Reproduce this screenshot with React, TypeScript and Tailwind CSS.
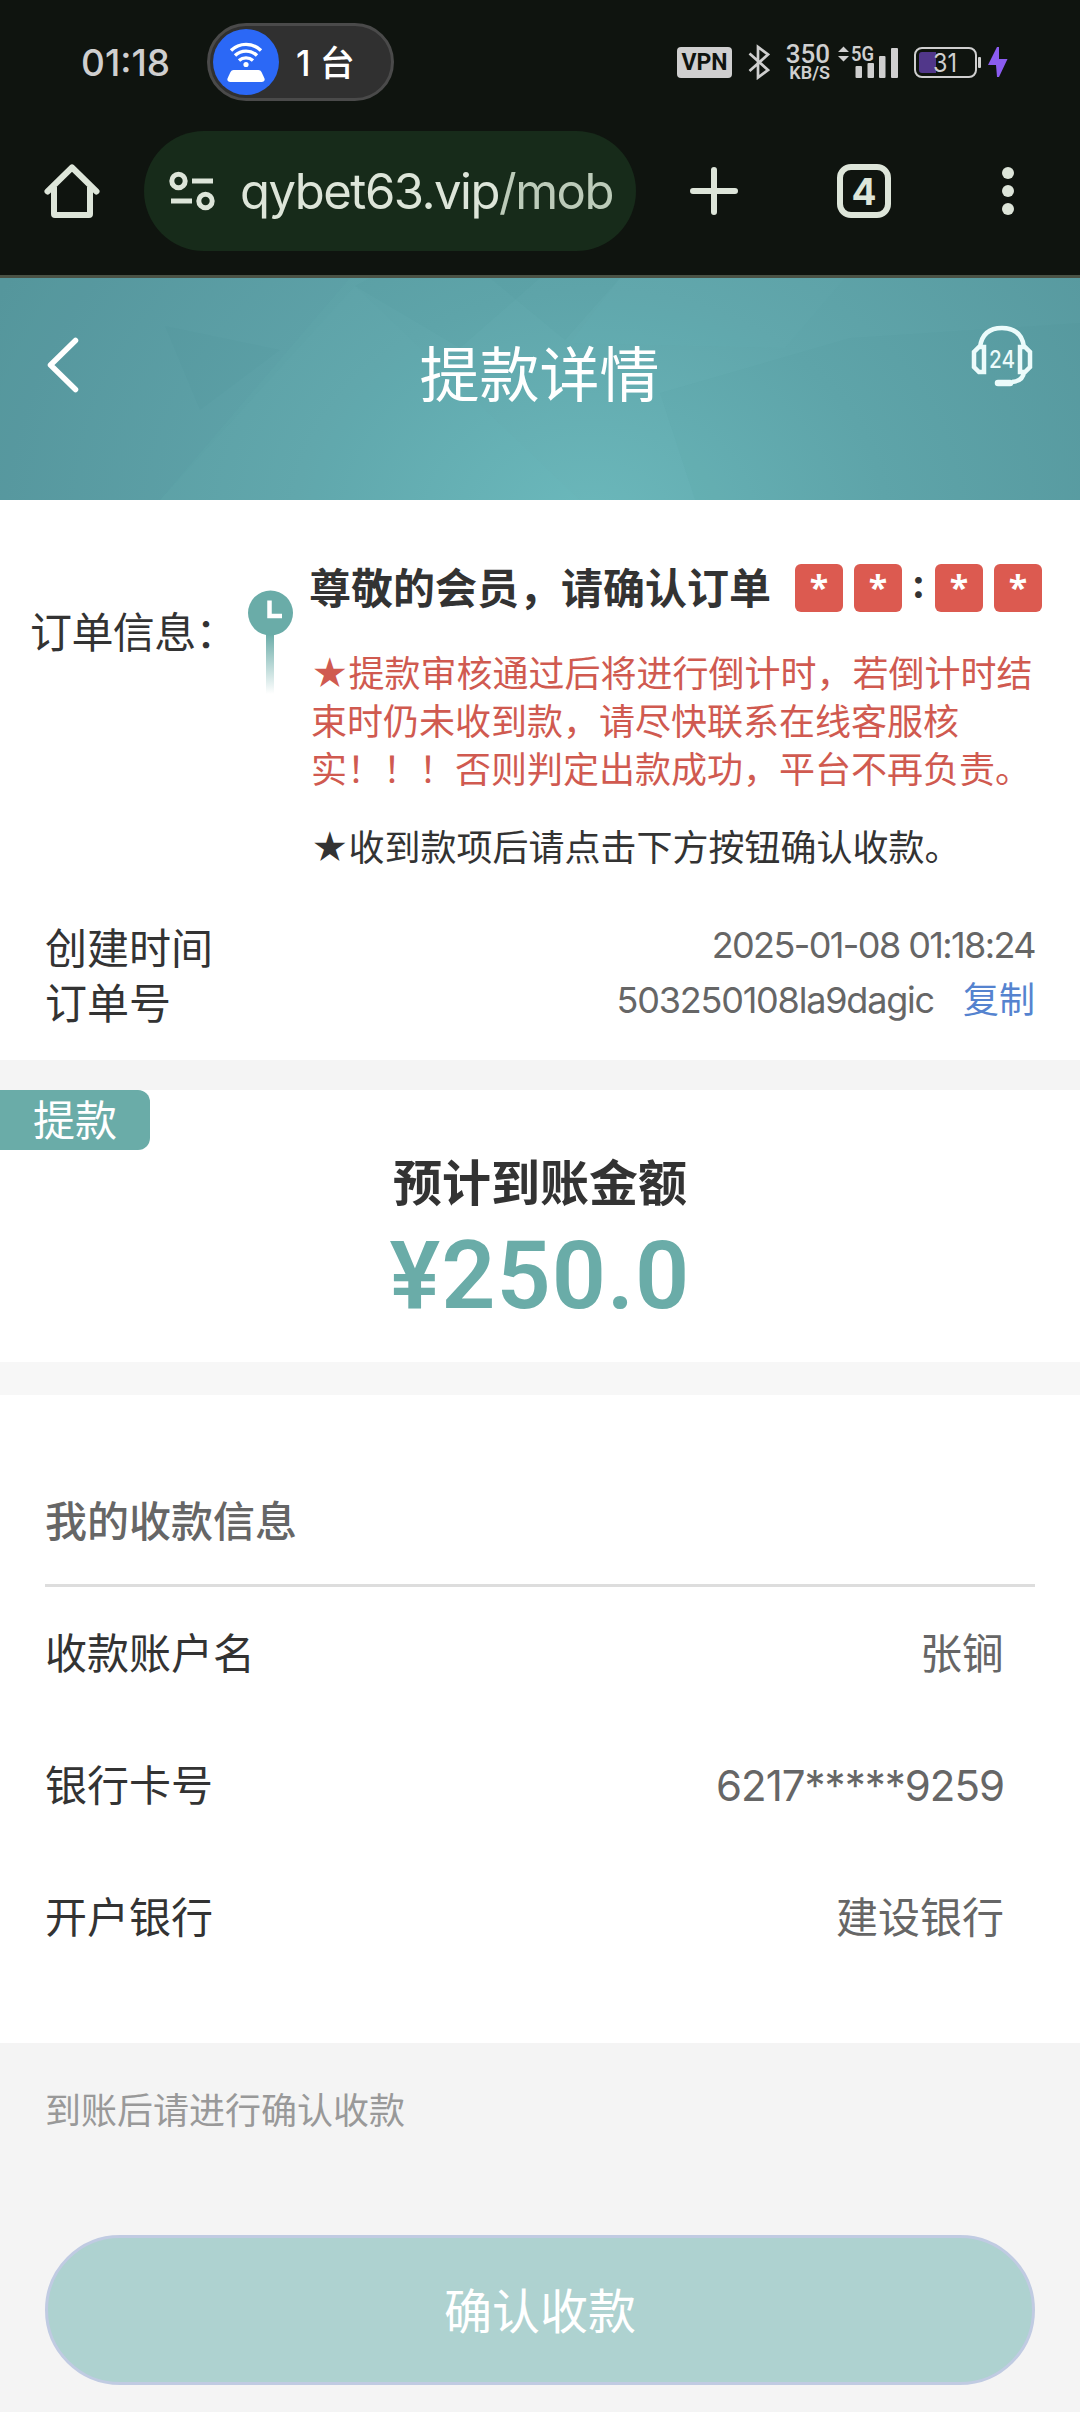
import type { ReactNode } from 'react'

const payeeRows = [
    { label: '收款账户名', value: '张锏' },
    { label: '银行卡号', value: '6217*****9259', numeric: true },
    { label: '开户银行', value: '建设银行' },
]

function StatusBar() {
    return (
        <div className="flex h-[124px] items-center pl-[81px] pr-[71px] text-[#cfcfcf]">
            <div className="w-[126px] text-[37px] font-medium leading-none">01:18</div>
            <div className="flex h-[78px] w-[187px] items-center rounded-full border-[3px] border-[#4a4a4a] bg-[#303030] pl-[3px]">
                <svg width="66" height="66" viewBox="0 0 66 66" fill="none">
                    <circle cx="33" cy="33" r="33" fill="#2b68f6" />
                    <g stroke="#fff" strokeWidth="3.4">
                        <path d="M18 21.500a21.500 21.500 0 0 1 30 0" />
                        <path d="M22 26.500a16 16 0 0 1 22 0" />
                        <path d="M26 31.500a10.500 10.500 0 0 1 14 0" />
                    </g>
                    <circle cx="33" cy="35.500" r="2.600" fill="#fff" />
                    <path d="M20.500 41h25q2 0 3 2l3 6.500q.8 3.500-3 3.500h-31q-3.800 0-3-3.500l3-6.500q1-2 3-2z" fill="#fff" />
                </svg>
                <span className="ml-[17px] pt-[2px] text-[35px] font-medium leading-none text-white">1 台</span>
            </div>
            <div className="ml-auto flex items-center">
                <div className="flex h-[31px] w-[55px] items-center justify-center rounded-[4px] bg-[#cfcfcf] font-[Roboto] text-[23px] font-bold leading-none text-[#0f140f]">
                    VPN
                </div>
                <svg className="ml-[16px]" width="22" height="36" viewBox="0 0 22 36" fill="none" stroke="#cfcfcf" strokeWidth="2.700">
                    <path d="M1.500 9.500 20 26l-10 7.500V3l10 7.500L1.500 27" />
                </svg>
                <div className="ml-[14px] w-[46px] pt-[2px] text-right font-[Roboto]">
                    <div className="text-[26px] font-medium leading-[19px]">350</div>
                    <div className="text-[18px] font-semibold leading-[18px]">KB/S</div>
                </div>
                <svg className="ml-[8px]" width="62" height="44" viewBox="0 -5 62 44" fill="#cfcfcf">
                    <path d="M0 7 5.500 1.500 11 7zM0 11 5.500 16.500 11 11z" />
                    <text className="font-[Roboto] text-[21px] font-semibold" x="13" y="15.500" textLength="23" lengthAdjust="spacingAndGlyphs">5G</text>
                    <rect x="17.500" y="21" width="6.500" height="12" rx="1" />
                    <rect x="29.500" y="18" width="6.500" height="15" rx="1" />
                    <rect x="41" y="11" width="6.500" height="22" rx="1" />
                    <rect x="53" y="3" width="7" height="30" rx="1" />
                </svg>
                <svg className="ml-[13px]" width="96" height="34" viewBox="0 0 96 34" fill="none">
                    <rect x="2" y="3" width="61" height="29" rx="7" stroke="#cfcfcf" strokeWidth="2" />
                    <path d="M9 7h14v21H9q-3 0-3-3V10q0-3 3-3z" fill="#51378a" />
                    <rect x="65" y="12" width="3" height="11" rx="1" fill="#cfcfcf" />
                    <text x="20" y="26.500" fill="#cfcfcf" fontSize="25" textLength="24" lengthAdjust="spacingAndGlyphs">31</text>
                    <path d="M84 2 75 20h8l1 12h2L94.500 14H86V2z" fill="#8b5cf0" />
                </svg>
            </div>
        </div>
    )
}

function BrowserBar() {
    return (
        <div className="flex h-[151px] items-start pl-[42px] pt-[7px]">
            <svg className="mt-[30px]" width="60" height="60" viewBox="0 0 60 60" fill="none" stroke="#dde5d9" strokeWidth="6">
                <path d="M5.500 30.500 30 6.500l24.500 24" strokeLinecap="round" strokeLinejoin="round" />
                <path d="M12 26v27q0 1 1 1h34q1 0 1-1V26" />
            </svg>
            <div className="ml-[42px] flex h-[120px] w-[492px] items-center rounded-full bg-[#172b1a] pl-[25px]">
                <svg width="48" height="40" viewBox="0 0 48 40" fill="none" stroke="#dde5d9" strokeWidth="5">
                    <circle cx="9.500" cy="10" r="6.700" />
                    <path d="M23 10h21M2 30h21" />
                    <circle cx="36.500" cy="30" r="6.700" />
                </svg>
                <span className="ml-[23px] whitespace-nowrap pt-[1px] text-[49px] leading-none tracking-[-1.5px] text-[#dde5d9]">
                    qybet63.vip<span className="text-[#bccbb9]">/mob</span>
                </span>
            </div>
            <svg className="ml-[54px] mt-[36px]" width="48" height="48" viewBox="0 0 48 48" stroke="#dde5d9" strokeWidth="6" strokeLinecap="round">
                <path d="M24 3v42M3 24h42" />
            </svg>
            <div className="ml-[99px] mt-[33px] flex h-[54px] w-[54px] items-center justify-center rounded-[14px] border-[6px] border-[#dde5d9] text-[37px] font-bold leading-none text-[#dde5d9]">
                4
            </div>
            <svg className="ml-[111px] mt-[36px]" width="12" height="48" viewBox="0 0 12 48" fill="#dde5d9">
                <circle cx="6" cy="6" r="6" />
                <circle cx="6" cy="24" r="6" />
                <circle cx="6" cy="42" r="6" />
            </svg>
        </div>
    )
}

function PageHeader() {
    return (
        <header className="relative h-[222px] bg-[#5a9fa5]">
            <svg className="absolute inset-0" width="1080" height="222" viewBox="0 0 1080 222">
                <defs>
                    <radialGradient id="glow" gradientUnits="userSpaceOnUse" cx="590" cy="250" r="660" gradientTransform="translate(0 50) scale(1 .8)">
                        <stop offset="0" stopColor="#6bb8bb" />
                        <stop offset=".45" stopColor="#60a6ab" />
                        <stop offset="1" stopColor="#56979d" />
                    </radialGradient>
                </defs>
                <rect width="1080" height="222" fill="url(#glow)" />
                <g fill="#2f7f88" fillOpacity=".04">
                    <path d="M355 8 460 70 540 0H370z" />
                    <path d="M165 48 280 72 200 132z" />
                    <path d="M490 0h130l-55 62z" />
                    <path d="M0 0h350L160 222H0z" fillOpacity=".02" />
                    <path d="M660 115 850 60 1080 45v177H695z" />
                </g>
                <g fill="#8fd0d2" fillOpacity=".03">
                    <path d="M355 8 580 222H160z" />
                    <path d="M620 0h225l-60 70-215-5z" />
                </g>
            </svg>
            <div className="relative flex h-full items-start pl-[45px] pr-[46px]">
                <svg className="mt-[58px]" width="36" height="58" viewBox="0 0 36 58" fill="none" stroke="#fff" strokeWidth="5.500" strokeLinecap="round" strokeLinejoin="round">
                    <path d="M30.500 4.500 5.500 29l25 24.500" />
                </svg>
                <h1 className="mt-[67px] flex-1 pl-[28px] text-center text-[60px] leading-[60px] text-white">提款详情</h1>
                <svg className="mt-[46px]" width="64" height="66" viewBox="0 0 64 66" fill="none" stroke="#ecfbfb" strokeWidth="4.500">
                    <path d="M10 23C12 9 21 4 32 4s20 5 22 19" />
                    <path d="M14 23v25H9l-5-5V28l5-5zM50 23v25h5l5-5V28l-5-5zM54 48q-1 9-12 10" />
                    <path d="M28 59h12" strokeWidth="6.500" strokeLinecap="round" />
                    <text x="19" y="44" fill="#ecfbfb" stroke="none" fontSize="24" fontWeight="500" textLength="26" lengthAdjust="spacingAndGlyphs">24</text>
                </svg>
            </div>
        </header>
    )
}

function CountBox() {
    return (
        <span className="flex h-[48px] w-[48px] justify-center rounded-[6px] bg-[#dc5a50] font-['Noto_Sans'] text-[34px] font-bold leading-[46px] text-white">
            *
        </span>
    )
}

function InfoRow({ label, children }: { label: string; children: ReactNode }) {
    return (
        <div className="flex h-[55px] items-center justify-between">
            <span className="text-[42px] leading-none">{label}</span>
            <span className="pb-[7px] text-[36px] leading-none text-[#666]">{children}</span>
        </div>
    )
}

export default function App() {
    return (
        <div className="h-[2412px] w-[1080px] overflow-hidden bg-[#f4f4f4] font-[Inter,'Noto_Sans_CJK_SC',sans-serif] text-[#333]">
            <div className="h-[278px] border-b-[3px] border-[#4a5245] bg-[#0f140f]">
                <StatusBar />
                <BrowserBar />
            </div>
            <PageHeader />

            {/* 订单信息 */}
            <section className="h-[560px] bg-white">
                <div className="flex h-[421px] pl-[30px]">
                    <div className="w-[218px] pt-[112px] text-[42px] leading-[42px] tracking-[-0.6px]">订单信息：</div>
                    <svg className="mt-[90px]" width="46" height="104" viewBox="0 0 46 104" fill="none">
                        <defs>
                            <linearGradient id="stem" x1="0" y1="0" x2="0" y2="1">
                                <stop offset="0" stopColor="#6aaca8" />
                                <stop offset="1" stopColor="#6aaca8" stopOpacity="0" />
                            </linearGradient>
                        </defs>
                        <rect x="18" y="44" width="8" height="60" fill="url(#stem)" />
                        <circle cx="22.500" cy="23" r="22.500" fill="#6aaca8" />
                        <path d="M21.500 10.500v15.500h12.500" stroke="#fff" strokeWidth="4.500" />
                    </svg>
                    <div className="ml-[15px] w-[733px]">
                        <div className="mt-[64px] flex h-[48px] items-center">
                            <strong className="w-[486px] whitespace-nowrap pt-[2px] text-[42px] font-bold leading-none">尊敬的会员，请确认订单</strong>
                            <div className="flex gap-[11px]">
                                <CountBox />
                                <CountBox />
                            </div>
                            <span className="w-[33px] pb-[8px] text-center text-[40px] font-bold leading-none">:</span>
                            <div className="flex gap-[11px]">
                                <CountBox />
                                <CountBox />
                            </div>
                        </div>
                        <p className="ml-[2px] mt-[38px] whitespace-nowrap text-[36px] leading-[48px] text-[#d05a50]">
                            ★提款审核通过后将进行倒计时，若倒计时结
                            <br />
                            束时仍未收到款，请尽快联系在线客服核
                            <br />
                            实！！！否则判定出款成功，平台不再负责。
                        </p>
                        <p className="ml-[2px] mt-[30px] whitespace-nowrap text-[36px] leading-[48px]">★收到款项后请点击下方按钮确认收款。</p>
                    </div>
                </div>
                <div className="px-[45px]">
                    <InfoRow label="创建时间">
                        <span className="tracking-[-1.6px]">2025-01-08 01:18:24</span>
                    </InfoRow>
                    <InfoRow label="订单号">
                        <span className="tracking-[-1.2px]">503250108la9dagic</span>
                        <span className="ml-[29px] text-[#5583cf]">复制</span>
                    </InfoRow>
                </div>
            </section>

            {/* 金额 */}
            <section className="mt-[30px] h-[272px] bg-white text-center">
                <div className="flex h-[60px] w-[150px] items-center rounded-r-[12px] bg-[#6aaca8] pl-[33px] pt-[2px] text-[42px] leading-none text-white">
                    提款
                </div>
                <div className="mt-[9px] text-[49px] font-bold leading-[50px]">预计到账金额</div>
                <div className="mt-[20px] font-[Roboto] text-[95px] font-semibold leading-[94px] tracking-[1px] text-[#6aaca8]">¥250.0</div>
            </section>
            <div className="h-[33px] bg-[#f7f7f7]" />

            {/* 收款信息 */}
            <section className="h-[648px] bg-white px-[45px] pt-[66px]">
                <h2 className="h-[126px] border-b-[3px] border-[#ddd] text-[42px] font-medium leading-[122px] text-[#666]">我的收款信息</h2>
                {payeeRows.map(row => (
                    <div key={row.label} className="flex h-[132px] items-center justify-between pr-[31px] pt-[2px] text-[42px] leading-none">
                        <span>{row.label}</span>
                        <span className={row.numeric ? 'tracking-[-1px] text-[#666]' : 'text-[#666]'}>{row.value}</span>
                    </div>
                ))}
            </section>

            <footer className="px-[45px] pt-[44px]">
                <p className="text-[36px] leading-[48px] text-[#999]">到账后请进行确认收款</p>
                <button className="mt-[100px] h-[150px] w-full rounded-full border-[3px] border-[#c0cbe2] bg-[#aed2d0] pt-[4px] text-[48px] leading-none text-white">
                    确认收款
                </button>
            </footer>
        </div>
    )
}
